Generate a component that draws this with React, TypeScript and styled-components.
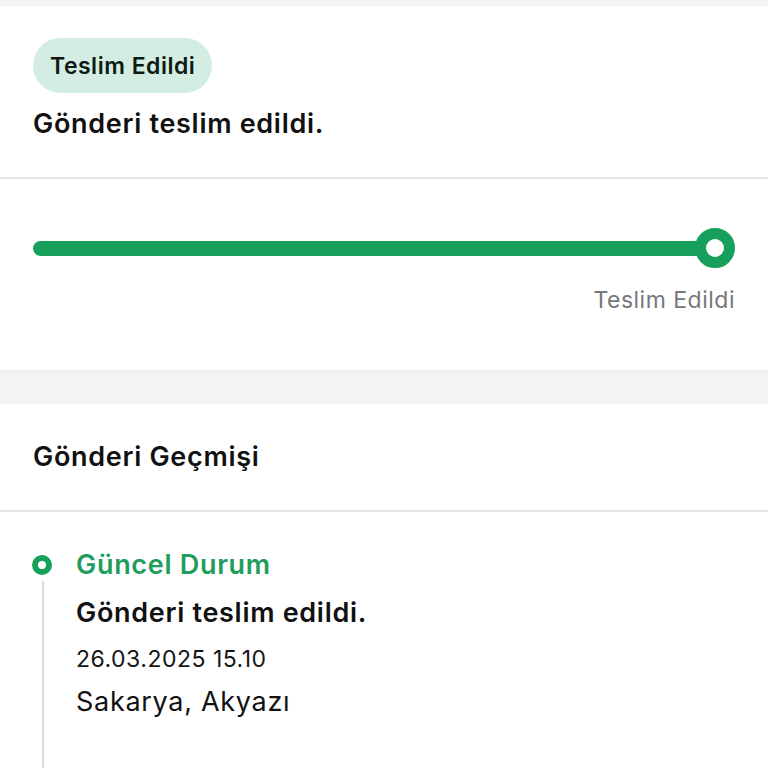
import styled, { createGlobalStyle } from "styled-components";

const GlobalStyle = createGlobalStyle`
  body {
    margin: 0;
    background: #f4f4f4;
    font-family: Inter, "Noto Sans", sans-serif;
    color: #111;
  }
`;

const green = "#17a05b";

const Page = styled.div`
  width: 768px;
  height: 768px;
  overflow: hidden;
  padding-top: 6px;
  box-sizing: border-box;
  display: flex;
  flex-direction: column;
  gap: 34px;
`;

const Card = styled.div`
  background: #fff;
  box-shadow: 0 1px 3px rgba(0, 0, 0, 0.05);
`;

const Divided = styled.div`
  border-bottom: 2px solid #e5e5e5;
  display: flex;
  flex-direction: column;
`;

const StatusHead = styled(Divided)`
  padding: 32px 33px 36px;
  align-items: flex-start;
`;

const Badge = styled.span`
  background: #d4ede2;
  color: #0f1a14;
  font-size: 23px;
  letter-spacing: 0.5px;
  font-weight: 600;
  height: 55px;
  padding: 0 17px;
  border-radius: 28px;
  display: inline-flex;
  align-items: center;
`;

const Title = styled.div<{ $color?: string; $weight?: number }>`
  font-size: 27px;
  letter-spacing: 0.7px;
  font-weight: ${({ $weight }) => $weight ?? 600};
  line-height: 34px;
  color: ${({ $color }) => $color ?? "#111"};
`;

const StatusTitle = styled(Title)`
  margin-top: 14px;
`;

const ProgressSection = styled.div`
  padding: 49px 33px 56px;
  display: flex;
  flex-direction: column;
  align-items: flex-end;
  gap: 18px;
`;

const Track = styled.div`
  width: 100%;
  height: 40px;
  display: flex;
  align-items: center;
`;

const Bar = styled.div`
  flex: 1;
  height: 15px;
  border-radius: 8px;
  background: ${green};
  margin-right: -10px;
`;

const Knob = styled.div`
  width: 18px;
  height: 18px;
  border-radius: 50%;
  border: 11px solid ${green};
  background: #fff;
  z-index: 1;
`;

const SmallText = styled.div<{ $color?: string }>`
  font-size: 23px;
  letter-spacing: 0.5px;
  line-height: 28px;
  color: ${({ $color }) => $color ?? "#151515"};
`;

const HistoryHead = styled(Divided)`
  padding: 36px 33px 36px;
`;

const Timeline = styled.div`
  padding: 36px 33px 0;
`;

const Entry = styled.div`
  display: grid;
  grid-template-columns: 18px 1fr;
  column-gap: 25px;
`;

const Rail = styled.div`
  display: flex;
  flex-direction: column;
  align-items: center;
  padding-top: 7px;
`;

const Dot = styled.div`
  width: 8px;
  height: 8px;
  border-radius: 50%;
  border: 6px solid ${green};
  background: #fff;
  flex-shrink: 0;
`;

const Line = styled.div`
  width: 2px;
  height: 220px;
  background: #dadada;
  margin: 6px 0 0 2px;
`;

const Body = styled.div`
  display: flex;
  flex-direction: column;
`;

const EntryTitle = styled(Title)`
  margin-top: 14px;
`;

const DateText = styled(SmallText)`
  margin-top: 15px;
`;

const Place = styled(Title)`
  margin-top: 12px;
`;

export default function App() {
  return (
    <>
      <GlobalStyle />
      <Page>
        <Card>
          <StatusHead>
            <Badge>Teslim Edildi</Badge>
            <StatusTitle>Gönderi teslim edildi.</StatusTitle>
          </StatusHead>
          <ProgressSection>
            <Track>
              <Bar />
              <Knob />
            </Track>
            <SmallText $color="#76787c">Teslim Edildi</SmallText>
          </ProgressSection>
        </Card>
        <Card>
          <HistoryHead>
            <Title>Gönderi Geçmişi</Title>
          </HistoryHead>
          <Timeline>
            <Entry>
              <Rail>
                <Dot />
                <Line />
              </Rail>
              <Body>
                <Title $color="#1f9d5c">Güncel Durum</Title>
                <EntryTitle>Gönderi teslim edildi.</EntryTitle>
                <DateText>26.03.2025 15.10</DateText>
                <Place $weight={400}>Sakarya, Akyazı</Place>
              </Body>
            </Entry>
          </Timeline>
        </Card>
      </Page>
    </>
  );
}
